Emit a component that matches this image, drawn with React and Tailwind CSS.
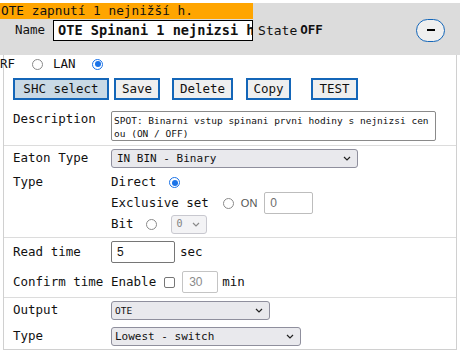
import React from "react";

const Radio = ({ checked }) =>
  checked ? (
    <span className="block w-[11px] h-[11px] rounded-full border-[1.5px] border-[#1a73e8] bg-white flex items-center justify-center shrink-0">
      <span className="block w-[6px] h-[6px] rounded-full bg-[#1a73e8]" />
    </span>
  ) : (
    <span className="block w-[11px] h-[11px] rounded-full border border-[#8a8a8a] bg-white shrink-0" />
  );

const Chevron = ({ color = "#222" }) => (
  <svg width="8" height="5" viewBox="0 0 8 5" className="shrink-0">
    <path d="M1 1 L4 4 L7 1" fill="none" stroke={color} strokeWidth="1.2" />
  </svg>
);

const FakeSelect = ({ value, className, textClass }) => (
  <div
    className={`h-[19px] bg-[#e9e9ed] border border-[#8f8f9d] rounded-[3px] flex items-center justify-between pr-[6px] ${className}`}
  >
    <span className={textClass}>{value}</span>
    <Chevron />
  </div>
);

const Btn = ({ children, className }) => (
  <div
    className={`h-[22px] border-2 border-[#1466b8] flex items-center justify-center ${className}`}
  >
    {children}
  </div>
);

const Divider = ({ className }) => (
  <div className={`border-t border-[#dcdcdc] ${className}`} />
);

export default function App() {
  return (
    <div className="w-[460px] h-[354px] bg-white pt-[3px] font-['DejaVu_Sans_Mono',monospace] text-[12.5px] leading-none text-[#111]">
      {/* HEADER */}
      <div className="bg-[#dcdcdc] h-[52px]">
        <div className="w-[253px] h-[16px] bg-[#ffa500] text-[12.75px] flex items-center pl-[1px] whitespace-nowrap">
          OTE zapnutí 1 nejnižší h.
        </div>
        <div className="flex items-center h-[22px]">
          <span className="pl-[15px]">Name</span>
          <input
            readOnly
            value="OTE Spinani 1 nejnizsi h."
            className="ml-[8px] w-[200px] h-[21px] bg-white border border-black pl-[4px] text-[13.6px] font-bold outline-none"
          />
          <span className="ml-[5px] text-[13px]">State</span>
          <span className="ml-[3px] font-bold">OFF</span>
          <div className="ml-auto mr-[15px] w-[29px] h-[23px] rounded-full border-[1.5px] border-[#1466b8] bg-[#efefef] flex items-center justify-center">
            <span className="block w-[8px] h-[1.5px] bg-black" />
          </div>
        </div>
      </div>

      {/* BODY */}
      <div className="ml-[3px] w-[454px] border-x border-b border-[#d0d0d0] pb-[3px]">
        <div className="flex items-center h-[18px] -ml-[4px]">
          <span className="w-[32px]">RF</span>
          <Radio />
          <span className="ml-[10px] w-[39px]">LAN</span>
          <Radio checked />
        </div>

        <div className="flex mt-[5px] pl-[9px]">
          <Btn className="w-[96px] bg-[#c9d9e5]">SHC select</Btn>
          <Btn className="ml-[5px] w-[46px] bg-[#efefef]">Save</Btn>
          <Btn className="ml-[12px] w-[61px] bg-[#efefef]">Delete</Btn>
          <Btn className="ml-[13px] w-[45px] bg-[#efefef]">Copy</Btn>
          <Btn className="ml-[20px] w-[47px] bg-[#efefef]">TEST</Btn>
        </div>

        <div className="flex items-start mt-[11px] pl-[9px]">
          <span className="w-[98px] pt-[2px]">Description</span>
          <div className="w-[325px] h-[30px] border border-[#8a8a8a] rounded-[2px] px-[2px] pt-[2px] text-[9.5px] leading-[13px] whitespace-nowrap overflow-hidden">
            SPOT: Binarni vstup spinani prvni hodiny s nejnizsi cen
            <br />
            ou (ON / OFF)
          </div>
        </div>

        <Divider className="mt-[4px]" />

        <div className="flex items-center pt-[3px] pl-[9px]">
          <span className="w-[98px]">Eaton Type</span>
          <FakeSelect
            value="IN BIN - Binary"
            className="w-[247px]"
            textClass="pl-[5px] text-[11px]"
          />
        </div>

        <div className="mt-[5px] pl-[9px]">
          <div className="flex items-center h-[19px]">
            <span className="w-[98px]">Type</span>
            <span>Direct</span>
            <span className="ml-[13px]">
              <Radio checked />
            </span>
          </div>
          <div className="flex items-center h-[22px]">
            <span className="w-[98px]" />
            <span>Exclusive set</span>
            <span className="ml-[14px]">
              <Radio />
            </span>
            <span className="ml-[7px] font-['Liberation_Sans',sans-serif] text-[11px] text-[#555]">
              ON
            </span>
            <div className="ml-[7px] w-[49px] h-[22px] border border-[#bdbdbd] rounded-[2px] flex items-center pl-[5px] font-['Liberation_Sans',sans-serif] text-[12px] text-[#6d6d6d]">
              0
            </div>
          </div>
          <div className="flex items-center h-[20px]">
            <span className="w-[98px]" />
            <span>Bit</span>
            <span className="ml-[12px]">
              <Radio />
            </span>
            <div className="ml-[14px] w-[36px] h-[19px] bg-[#f3f3f5] border border-[#c8c8cf] rounded-[3px] flex items-center justify-between pl-[5px] pr-[6px] text-[10px] text-[#808080]">
              <span>0</span>
              <Chevron color="#8a8a8a" />
            </div>
          </div>
        </div>

        <Divider className="mt-[3px]" />

        <div className="flex items-center h-[22px] mt-[3px] pl-[9px]">
          <span className="w-[98px]">Read time</span>
          <div className="w-[64px] h-[22px] border border-[#767676] rounded-[2px] flex items-center pl-[5px] font-['Liberation_Sans',sans-serif] text-[12px]">
            5
          </div>
          <span className="ml-[5px]">sec</span>
        </div>

        <div className="flex items-center h-[22px] mt-[8px] pl-[9px]">
          <span className="w-[98px] whitespace-nowrap">Confirm time</span>
          <span>Enable</span>
          <span className="block ml-[8px] w-[11px] h-[11px] rounded-[2px] border border-[#767676] bg-white" />
          <div className="ml-[7px] w-[36px] h-[22px] border border-[#c4c4c4] rounded-[2px] flex items-center pl-[6px] font-['Liberation_Sans',sans-serif] text-[12px] text-[#8a8a8a]">
            30
          </div>
          <span className="ml-[4px]">min</span>
        </div>

        <Divider className="mt-[4px]" />

        <div className="flex items-center mt-[3px] pl-[9px]">
          <span className="w-[98px]">Output</span>
          <FakeSelect
            value="OTE"
            className="w-[159px]"
            textClass="pl-[3px] text-[9.5px]"
          />
        </div>

        <div className="flex items-center mt-[7px] pl-[9px]">
          <span className="w-[98px]">Type</span>
          <FakeSelect
            value="Lowest - switch"
            className="w-[190px]"
            textClass="pl-[3px] text-[11px]"
          />
        </div>
      </div>
    </div>
  );
}
